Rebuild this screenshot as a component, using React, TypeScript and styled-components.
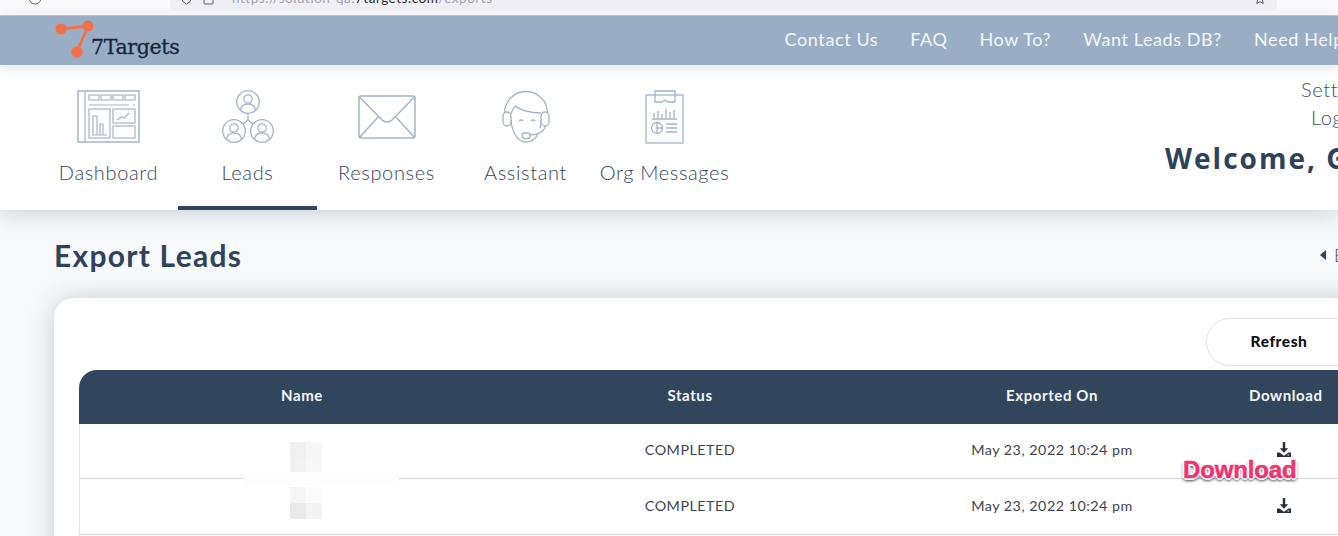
import React from "react";
import styled, { createGlobalStyle } from "styled-components";

const Global = createGlobalStyle`
  html, body { margin: 0; padding: 0; height: 100%; overflow: hidden; background: #f7f9fb; }
  body { font-family: "Lato", "Open Sans", "Liberation Sans", sans-serif; }
  * { box-sizing: border-box; }
`;
const Page = styled.div`width: 1338px; height: 536px; overflow: hidden; display: flex; flex-direction: column; background: #f7f9fb; position: relative;`;
const BrowserBar = styled.div`height: 16px; flex: none; background: #fafafc; border-bottom: 1px solid #c4c7cb; padding-left: 170px; display: flex; position: relative;`;
const Reload = styled.svg`position: absolute; left: 28px; top: -9px; color: #55575d;`;
const UrlField = styled.div`width: 1107px; height: 11px; background: #efeff4; border-radius: 0 0 5px 5px; display: flex; align-items: flex-start; padding-left: 11px; overflow: hidden; color: #55575d;`;
const UrlIcon = styled.svg`flex: none; margin: -7px 11px 0 0;`;
const UrlText = styled.span`flex: 1; font: 13.5px/14px "Lato", sans-serif; color: #a2a3aa; margin: -9px 0 0 7px; letter-spacing: .52px; white-space: nowrap;`;
const UrlHost = styled.span`color: #26272b;`;
const Top = styled.header`height: 49px; flex: none; background: #99aec4; display: flex; align-items: center; justify-content: space-between; padding: 0 0 3px 54px; position: relative; z-index: 2; box-shadow: 0 3px 12px rgba(40,50,70,.13);`;
const Logo = styled.div`width: 130px; height: 49px; position: relative;`;
const LogoMark = styled.svg`position: absolute; left: 0; top: 5px;`;
const LogoText = styled.span`position: absolute; left: 37px; top: 20px; font: 400 20.5px/24px "DejaVu Serif", serif; -webkit-text-stroke: .3px #13263f; color: #13263f; letter-spacing: -.35px;`;
const TopNav = styled.nav`display: flex; gap: 32px; margin-right: -14px; white-space: nowrap;`;
const TopLink = styled.a`font-size: 18px; color: #f3f6f9; letter-spacing: .6px;`;
const Main = styled.div`height: 145px; flex: none; background: #fff; display: flex; justify-content: space-between; padding-left: 39px; box-shadow: 0 4px 22px rgba(40,50,70,.2); position: relative; z-index: 1;`;
const Tabs = styled.div`display: flex;`;
const Tab = styled.div<{ $active?: boolean }>`width: 139px; height: 145px; display: flex; flex-direction: column; align-items: center; padding-top: 24px; border-bottom: 4px solid ${p => (p.$active ? "#31465d" : "transparent")};`;
const IconBox = styled.div`height: 56px; display: flex; align-items: center; justify-content: center; color: #a3b4c9;`;
const TabLabel = styled.span`margin-top: 15px; font-size: 20px; line-height: 24px; letter-spacing: .65px; white-space: nowrap; font-weight: 300; color: #38455a;`;
const UserBox = styled.div`width: 197px; flex: none; overflow: hidden; position: relative; color: #44505f;`;
const UserLink = styled.div<{ $l: number }>`position: absolute; left: ${p => p.$l}px; font-size: 20px; line-height: 24px; white-space: nowrap; font-weight: 300; letter-spacing: .6px;`;
const Settings = styled(UserLink)`top: 12px;`;
const LogLink = styled(UserLink)`top: 40px;`;
const Welcome = styled.div`position: absolute; left: 24px; top: 75px; font: 700 28px/36px "Open Sans", sans-serif; color: #2e435b; white-space: nowrap; letter-spacing: 2px;`;
const Content = styled.main`flex: 1; padding: 27px 0 0 54px; min-height: 0;`;
const TitleRow = styled.div`display: flex; justify-content: space-between; height: 61px; margin-right: -42px;`;
const Title = styled.h1`margin: 0; font-size: 30px; line-height: 36px; font-weight: 700; color: #2f445c; letter-spacing: 1.25px;`;
const Back = styled.div`display: flex; align-items: center; gap: 8px; height: 36px; width: 60px; font-size: 18px; color: #3e4a59; font-weight: 300;`;
const BackArrow = styled.i`width: 0; height: 0; border: 5px solid transparent; border-left: 0; border-right: 6px solid #2f445c;`;
const Card = styled.section`width: 1320px; height: 300px; background: #fff; border-radius: 20px 20px 0 0; padding: 20px 0 0 25px; box-shadow: 0 0 26px rgba(40,50,70,.22);`;
const Toolbar = styled.div`height: 52px; padding-left: 1127px;`;
const Refresh = styled.button`display: block; width: 160px; height: 48px; border-radius: 24px; border: 1px solid #dfe0e2; background: #fff; font: 900 15.5px "Lato", sans-serif; letter-spacing: .55px; color: #111; padding: 0 14px 2px 0; text-align: center;`;
const Row = styled.div`display: grid; grid-template-columns: 446px 330px 394px 72px; width: 1295px; align-items: center; text-align: center; height: 56px; padding-bottom: 2px; border-bottom: 1px solid #d8d8d8; box-shadow: inset 1px 0 0 #e2e2e2; font-size: 14.3px; color: #3e4450; letter-spacing: .5px; position: relative;`;
const FirstRow = styled(Row)`height: 55px; padding-bottom: 3px;`;
const Head = styled(Row)`height: 54px; padding-bottom: 4px; background: #31465d; color: #f3f5f7; border: 0; box-shadow: none; border-radius: 18px 18px 0 0; font-weight: 700; font-size: 15px; letter-spacing: .6px;`;
const Cell = styled.div``;
const BlurStack = styled.div<{ $t: number }>`position: absolute; left: 211px; top: ${p => p.$t}px; display: grid; grid-template-columns: 16px 16px; grid-auto-rows: 16px;`;
const Blur = styled.i<{ $c: string }>`display: block; background: ${p => p.$c};`;
const WhiteStrip = styled.div`position: absolute; left: 244px; top: 472px; width: 154px; height: 14px; background: #fdfdfd; z-index: 2;`;
const Badge = styled.div`position: absolute; left: 1183px; top: 457px; z-index: 4; font: 700 24px/26px "Liberation Sans", sans-serif; color: #f2316f; -webkit-text-stroke: .5px #f2316f; letter-spacing: -.15px; white-space: nowrap;
  text-shadow: -1px -1px 0 #fff, 1px -1px 0 #fff, -1px 1px 0 #fff, 1px 1px 0 #fff, 0 -2px 0 #fff, 0 2px 0 #fff, -2px 0 0 #fff, 2px 0 0 #fff, 0 3px 3px rgba(0,0,0,.55), 2px 2px 3px rgba(0,0,0,.3), -2px 2px 3px rgba(0,0,0,.3);`;
const Dl = styled.svg`display: block; margin: 0 auto; transform: translateX(-1px);`;

const DashIcon = () => (
  <svg width="64" height="54" viewBox="0 0 64 54" fill="none" stroke="currentColor" strokeWidth="1.2">
    <rect x="1" y="1" width="61" height="51" strokeWidth="1.5" /><path d="M8 1v51" />
    <rect x="12" y="5" width="10" height="5" /><rect x="24" y="5" width="10" height="5" /><rect x="36" y="5" width="10" height="5" /><rect x="48" y="5" width="10" height="5" />
    <path d="M12 15h40M56 15h2" /><rect x="12" y="19" width="21" height="29" /><rect x="36" y="19" width="22" height="14" /><rect x="36" y="36" width="22" height="12" />
    <path d="M16 45V26h4v19M23 45V34h3v11M15 45h15M40 30l5-3 2 1 5-5" />
  </svg>
);
const Person = ({ x, y }: { x: number; y: number }) => (
  <g transform={`translate(${x} ${y})`}>
    <circle cx="12" cy="12" r="11.3" /><circle cx="12" cy="9" r="4.2" /><path d="M4.500 20c1-5 4-6 7.500-6s6.500 1 7.500 6" />
  </g>
);
const LeadsIcon = () => (
  <svg width="54" height="54" viewBox="0 0 54 54" fill="none" stroke="currentColor" strokeWidth="1.3">
    <Person x={15} y={0} /><Person x={1} y={29} /><Person x={29} y={29} />
    <path d="M27 24v6M27 30l-5 4M27 30l5 4" />
  </svg>
);
const MailIcon = () => (
  <svg width="58" height="44" viewBox="0 0 58 44" fill="none" stroke="currentColor" strokeWidth="1.5">
    <rect x="1" y="1" width="56" height="42" rx="2" />
    <path d="M1.500 2 24 25q5 4 10 0L56.500 2M2 42l18-20M56 42 38 22" />
  </svg>
);
const AgentIcon = () => (
  <svg width="48" height="54" viewBox="0 0 48 54" fill="none" stroke="currentColor" strokeWidth="1.3">
    <path d="M2.500 23a21.500 21.500 0 0 1 43 0" />
    <rect x="1" y="22" width="8" height="14" rx="4" /><rect x="39" y="22" width="8" height="14" rx="4" />
    <path d="M9 24c1-3 3-7 5-8 3 4 15 7 25 7M9 30c1 13 7 22 15 22 5 0 9-2 12-8M39 30c0 3-.4 6-1 8" />
    <path d="M17 31q2-2 4 0M29 31q2-2 4 0M43 36c0 5-7 9-15 9" />
    <rect x="20" y="43" width="8" height="5.500" rx="2.700" />
  </svg>
);
const OrgIcon = () => (
  <svg width="40" height="54" viewBox="0 0 40 54" fill="none" stroke="currentColor" strokeWidth="1.3">
    <rect x="1" y="5" width="37" height="48" /><path d="M10 12V1h20v11h-7l-3-2-3 2z" />
    <path d="M7 29h25M9 28v-5M13 28v-7M17 28v-4M21 28v-9M25 28v-6M29 28v-8" />
    <circle cx="12" cy="38" r="5.500" /><path d="M12 33v11M12 38h5.500M21 34h11M21 38h11M21 42h11" />
  </svg>
);
const DlIcon = () => (
  <Dl width="16" height="16" viewBox="0 0 16 16" fill="#26303c">
    <path d="M6.800 0h2.400v6.300h3L8 10.800 3.800 6.300h3z" />
    <path fillRule="evenodd" d="M1 10.500h2.500L8 13.800l4.500-3.300H15V15H1zM11.500 12.600h1.600v.9h-1.600z" />
  </Dl>
);

export default function App() {
  return (
    <Page>
      <Global />
      <BrowserBar>
        <Reload width="14" height="14" viewBox="0 0 14 14" fill="none" stroke="currentColor" strokeWidth="1"><circle cx="7" cy="7" r="6" /></Reload>
        <UrlField>
          <UrlIcon width="11" height="12" viewBox="0 0 11 12" fill="none" stroke="currentColor"><path d="M1 2h9v4q0 3-4.500 5Q1 9 1 6z" /></UrlIcon>
          <UrlIcon width="11" height="12" viewBox="0 0 11 12" fill="none" stroke="currentColor"><rect x="1" y="2" width="9" height="9" rx="1" /></UrlIcon>
          <UrlText>https://solution-qa.<UrlHost>7targets.com</UrlHost>/exports</UrlText>
          <UrlIcon width="12" height="12" viewBox="0 0 12 12" fill="none" stroke="currentColor"><path d="M6 .5 7.500 4l3.500.4-2.600 2.400.8 3.700L6 8.700 2.800 10.500l.8-3.700L1 4.400 4.500 4z" /></UrlIcon>
        </UrlField>
      </BrowserBar>
      <Top>
        <Logo>
          <LogoMark width="44" height="42" viewBox="0 0 44 42">
            <path d="M7 9 34 6 23 32" fill="none" stroke="#f4704b" strokeWidth="2.800" />
            <circle cx="7" cy="9" r="5.500" fill="#f4704b" /><circle cx="34" cy="6" r="5.500" fill="#f4704b" /><circle cx="23" cy="32" r="5.800" fill="#f4704b" />
          </LogoMark>
          <LogoText>7Targets</LogoText>
        </Logo>
        <TopNav>
          <TopLink>Contact Us</TopLink><TopLink>FAQ</TopLink><TopLink>How To?</TopLink><TopLink>Want Leads DB?</TopLink><TopLink>Need Help?</TopLink>
        </TopNav>
      </Top>
      <Main>
        <Tabs>
          <Tab><IconBox><DashIcon /></IconBox><TabLabel>Dashboard</TabLabel></Tab>
          <Tab $active><IconBox><LeadsIcon /></IconBox><TabLabel>Leads</TabLabel></Tab>
          <Tab><IconBox><MailIcon /></IconBox><TabLabel>Responses</TabLabel></Tab>
          <Tab><IconBox><AgentIcon /></IconBox><TabLabel>Assistant</TabLabel></Tab>
          <Tab><IconBox><OrgIcon /></IconBox><TabLabel>Org Messages</TabLabel></Tab>
        </Tabs>
        <UserBox>
          <Settings $l={160}>Settings</Settings>
          <LogLink $l={170}>Logout</LogLink>
          <Welcome>Welcome, Guest</Welcome>
        </UserBox>
      </Main>
      <Content>
        <TitleRow>
          <Title>Export Leads</Title>
          <Back><BackArrow />Back</Back>
        </TitleRow>
        <Card>
          <Toolbar><Refresh>Refresh</Refresh></Toolbar>
          <Head>
            <Cell>Name</Cell><Cell>Status</Cell><Cell>Exported On</Cell><Cell>Download</Cell>
          </Head>
          <FirstRow>
            <BlurStack $t={18}>{["#f0f0f0", "#f7f7f7", "#f2f2f2", "#f8f8f8"].map((c, i) => <Blur key={i} $c={c} />)}</BlurStack>
            <Cell /><Cell>COMPLETED</Cell><Cell>May 23, 2022 10:24 pm</Cell><Cell><DlIcon /></Cell>
          </FirstRow>
          <Row>
            <BlurStack $t={8}>{["#f6f6f6", "#fbfbfb", "#e9e9e9", "#f4f4f4"].map((c, i) => <Blur key={i} $c={c} />)}</BlurStack>
            <Cell /><Cell>COMPLETED</Cell><Cell>May 23, 2022 10:24 pm</Cell><Cell><DlIcon /></Cell>
          </Row>
        </Card>
      </Content>
      <WhiteStrip />
      <Badge>Download</Badge>
    </Page>
  );
}
